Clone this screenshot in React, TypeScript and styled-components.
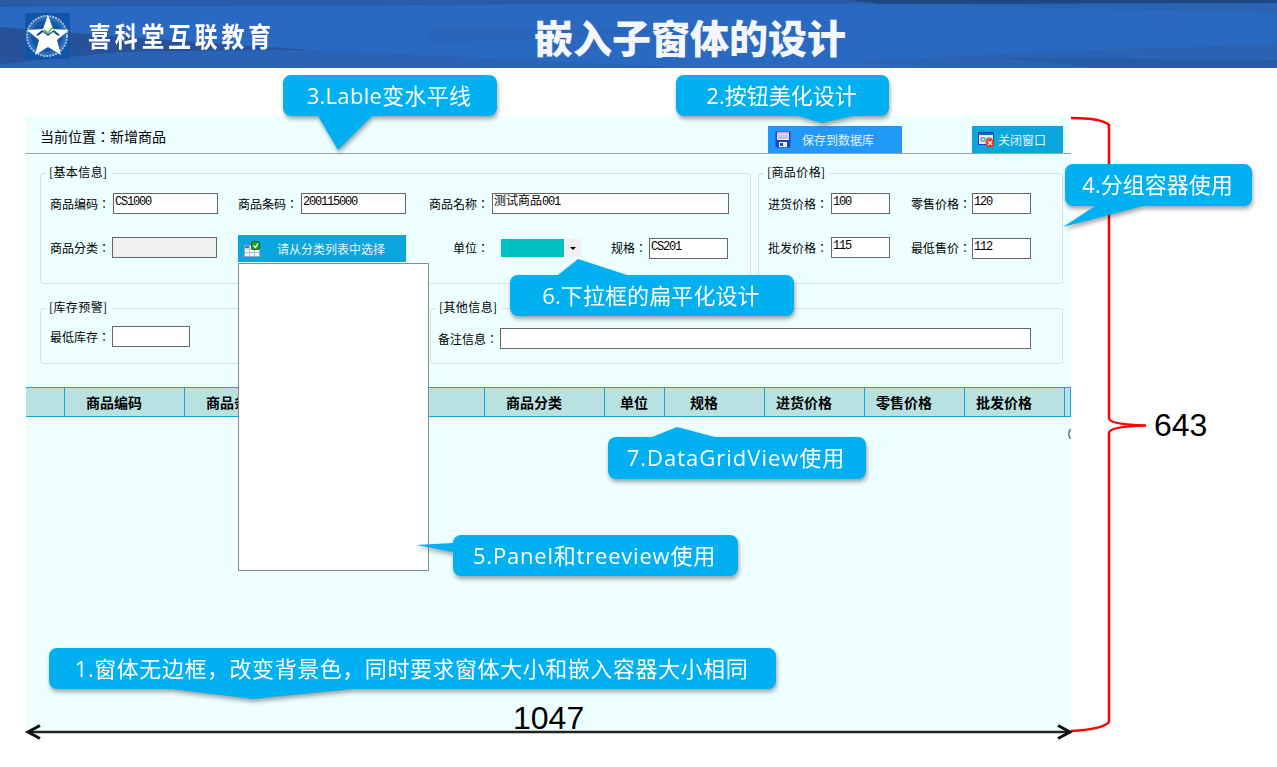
import React from 'react'
import { styled, createGlobalStyle } from 'styled-components'

const GlobalStyle = createGlobalStyle`
    html, body {
        margin: 0;
        padding: 0;
        background: #ffffff;
        overflow: hidden;
    }
    * {
        box-sizing: border-box;
    }
`

const UI_FONT = `"Noto Sans CJK SC", "Liberation Sans", sans-serif`
// the TC cut centres the full width colon, as the form labels in the picture do
const LABEL_FONT = `"Noto Sans CJK TC", "Noto Sans CJK SC", sans-serif`
const CALLOUT_FONT = `"Open Sans", "Noto Sans CJK SC", sans-serif`

const Slide = styled.div`
    position: relative;
    width: 1277px;
    height: 767px;
    overflow: hidden;
    background: #ffffff;
    font-family: ${UI_FONT};
`

const Header = styled.header`
    position: relative;
    display: flex;
    align-items: center;
    height: 68px;
    padding-left: 25px;
    background: #2a69c2;
    overflow: hidden;
`

const HeaderArt = styled.svg`
    position: absolute;
    left: 0;
    top: 0;
`

const LogoBox = styled.svg`
    position: relative;
    flex: none;
    margin-top: 4px;
`

const Brand = styled.div`
    position: relative;
    width: 186px;
    margin-left: 18px;
    margin-top: 3px;
    color: #ffffff;
    font-size: 27px;
    font-weight: 700;
    letter-spacing: 4.4px;
    white-space: nowrap;
    transform: scaleX(0.85);
    transform-origin: left center;
`

const Title = styled.h1`
    position: relative;
    margin: 4px 0 0 260px;
    color: #f4f6fa;
    font-size: 39px;
    line-height: 48px;
    font-weight: 900;
    white-space: nowrap;
`

const FormWindow = styled.main`
    position: relative;
    margin: 48px 0 0 26px;
    width: 1045px;
    height: 616px;
    background: #eeffff;
    color: #000000;
    font-size: 12px;
`

const Toolbar = styled.div`
    display: flex;
    align-items: flex-end;
    height: 38px;
    padding: 0 8px 0 14px;
    border-bottom: 1px solid #9a9fa0;
`

const Breadcrumb = styled.div`
    margin-right: auto;
    margin-bottom: 7px;
    font-family: ${LABEL_FONT};
    font-size: 14px;
    line-height: 20px;
`

const ToolButton = styled.div<{ $w: number; $bg: string; $gap: number; $iconLeft: number; $left?: number }>`
    display: flex;
    align-items: center;
    width: ${props => props.$w}px;
    height: 27px;
    margin-left: ${props => props.$left ?? 0}px;
    padding-left: ${props => props.$iconLeft}px;
    gap: ${props => props.$gap}px;
    background: ${props => props.$bg};
    color: #e8f4ff;
    font-size: 12px;
`

const GroupRow = styled.div<{ $top: number }>`
    display: flex;
    gap: 7px;
    margin-top: ${props => props.$top}px;
    padding-left: 14px;
`

const Group = styled.section<{ $w: number; $h: number; $padTop: number; $padLeft: number }>`
    position: relative;
    width: ${props => props.$w}px;
    height: ${props => props.$h}px;
    padding: ${props => props.$padTop}px 0 0 ${props => props.$padLeft}px;
    border: 1px solid #d4e0e4;
    border-radius: 4px;
`

const Legend = styled.div`
    position: absolute;
    left: 5px;
    top: -10px;
    padding: 0 3px;
    background: #eeffff;
    font-size: 12px;
    line-height: 16px;
    letter-spacing: 0.4px;
    white-space: nowrap;
`

const FieldRow = styled.div<{ $top?: number }>`
    display: flex;
    align-items: center;
    height: 21px;
    margin-top: ${props => props.$top ?? 0}px;
`

const Field = styled.div<{ $w: number }>`
    position: relative;
    display: flex;
    align-items: center;
    flex: none;
    width: ${props => props.$w}px;
    height: 21px;
`

const Label = styled.span<{ $w: number }>`
    flex: none;
    width: ${props => props.$w}px;
    font-family: ${LABEL_FONT};
    font-size: 12px;
    line-height: 21px;
    white-space: nowrap;
`

const TextBox = styled.div<{ $w: number; $disabled?: boolean; $shift?: number }>`
    flex: none;
    width: ${props => props.$w}px;
    height: 21px;
    margin-top: ${props => props.$shift ?? 0}px;
    padding: 1px 0 0 1px;
    border: 1px solid #666666;
    background: ${props => (props.$disabled ? '#efefef' : '#ffffff')};
    font-family: "Liberation Mono", ${UI_FONT};
    font-size: 12px;
    line-height: 14px;
    letter-spacing: -1.2px;
    white-space: nowrap;
    overflow: hidden;
`

const Han = styled.span`
    letter-spacing: 0;
`

const CategoryButton = styled.div`
    position: relative;
    flex: none;
    display: flex;
    align-items: center;
    width: 168px;
    height: 27px;
    margin-top: 2px;
    padding-left: 6px;
    background: #0aa6dc;
    color: #e8f6ff;
    font-size: 12px;
`

const CategoryText = styled.span`
    margin-left: 17px;
`

const TreePanel = styled.div`
    position: absolute;
    left: 0;
    top: 28px;
    z-index: 2;
    width: 191px;
    height: 308px;
    background: #ffffff;
    border: 1px solid #868b93;
`

const Combo = styled.div`
    flex: none;
    display: flex;
    width: 80px;
    height: 18px;
    margin-top: 1px;
`

const ComboValue = styled.div`
    width: 63px;
    background: #00c2c0;
`

const ComboArrow = styled.div`
    display: flex;
    align-items: center;
    justify-content: center;
    width: 17px;
    background: #f0f0f0;
    &::after {
        content: '';
        border-top: 3px solid #000000;
        border-left: 3px solid transparent;
        border-right: 3px solid transparent;
    }
`

const Grid = styled.div`
    display: flex;
    height: 30px;
    margin-top: 23px;
    background: #b8e2e2;
    border-top: 1px solid #0ea5dc;
    border-bottom: 1px solid #0ea5dc;
`

const GridCell = styled.div<{ $w: number; $pad?: number }>`
    flex: none;
    width: ${props => props.$w}px;
    padding-left: ${props => props.$pad ?? 0}px;
    border-right: 1px solid #0ea5dc;
    font-size: 14px;
    font-weight: 700;
    line-height: 29px;
    white-space: nowrap;
`

const StrayMark = styled.div`
    position: absolute;
    right: 0;
    top: 311px;
    font-family: "Liberation Sans", sans-serif;
    font-size: 10px;
    line-height: 14px;
`

const Callout = styled.div<{ $x: number; $y: number; $w: number; $h: number; $spacing?: number }>`
    position: absolute;
    z-index: 3;
    left: ${props => props.$x}px;
    top: ${props => props.$y}px;
    display: flex;
    align-items: center;
    justify-content: center;
    width: ${props => props.$w}px;
    height: ${props => props.$h}px;
    padding: 0 2px 4px 0;
    border-radius: 8px;
    background: #00b0f0;
    color: #ffffff;
    font-family: ${CALLOUT_FONT};
    font-size: 22px;
    letter-spacing: ${props => props.$spacing ?? 0}px;
    white-space: nowrap;
    filter: drop-shadow(1px 3px 2px rgba(0, 0, 0, 0.35));
`

const CalloutTail = styled.svg`
    position: absolute;
    left: 0;
    top: 0;
    overflow: visible;
`

const Dimension = styled.svg`
    position: absolute;
    z-index: 2;
    left: 0;
    top: 0;
    pointer-events: none;
`

const Measure = styled.div<{ $x: number; $y: number }>`
    position: absolute;
    z-index: 3;
    left: ${props => props.$x}px;
    top: ${props => props.$y}px;
    color: #000000;
    font-family: "Liberation Sans", sans-serif;
    font-size: 32px;
    line-height: 36px;
`

const callouts = [
    { text: '3.Lable变水平线', x: 283, y: 75, w: 214, h: 41, tail: '318,116 338,150 372,116', spacing: 0.3 },
    { text: '2.按钮美化设计', x: 676, y: 75, w: 213, h: 41, tail: '798,116 822,123 853,116' },
    { text: '4.分组容器使用', x: 1065, y: 164, w: 187, h: 42, tail: '1095,206 1063,227 1143,206' },
    { text: '6.下拉框的扁平化设计', x: 510, y: 275, w: 284, h: 41, tail: '558,275 578,259 627,275', spacing: 0.1 },
    { text: '7.DataGridView使用', x: 608, y: 437, w: 258, h: 42, tail: '652,437 677,427 715,437', spacing: 1 },
    { text: '5.Panel和treeview使用', x: 453, y: 535, w: 285, h: 41, tail: '453,543 416,545 453,552', spacing: 0.8 },
    {
        text: '1.窗体无边框，改变背景色，同时要求窗体大小和嵌入容器大小相同',
        x: 49,
        y: 648,
        w: 727,
        h: 41,
        tail: '171,689 253,699 352,689',
        spacing: 0.55,
    },
]

const gridColumns = [
    { w: 39 },
    { w: 120, text: '商品编码', pad: 21 },
    { w: 120, text: '商品条码', pad: 21 },
    { w: 180 },
    { w: 120, text: '商品分类', pad: 21 },
    { w: 60, text: '单位', pad: 15 },
    { w: 100, text: '规格', pad: 25 },
    { w: 100, text: '进货价格', pad: 11 },
    { w: 100, text: '零售价格', pad: 11 },
    { w: 100, text: '批发价格', pad: 11 },
    { w: 6 },
]

const Logo = () => (
    <LogoBox width="45" height="46" viewBox="0 0 45 46">
        <rect width="45" height="46" rx="2" fill="#0e56aa" />
        <circle cx="22" cy="23" r="20" fill="#2a6cb8" stroke="#a9bfd8" strokeWidth="2" strokeDasharray="2 1" />
        <circle cx="22" cy="23" r="16" fill="#1556a6" />
        <polygon
            points="23,2 28,16 44,17 32,27 36,42 23,34 10,42 14,27 2,17 18,16"
            fill="#ffffff"
        />
        <path d="M11 22 L17 17 L23 21 L29 17 L35 22 L30 24 L23 27 L16 24 Z" fill="#1c4f96" />
        <path d="M13 23 L18 19 L23 23 L28 19 L33 23 L23 31 Z" fill="#ffffff" />
        <path d="M19 17 L23 20 L28 14" fill="none" stroke="#62b848" strokeWidth="1.6" />
    </LogoBox>
)

const FloppyIcon = () => (
    <svg width="16" height="17" viewBox="0 0 16 17">
        <rect x="0.5" y="0.5" width="15" height="16" fill="#1546c0" />
        <rect x="2" y="1" width="12" height="2" fill="#f0a0e8" />
        <rect x="2" y="3" width="12" height="6" fill="#e8e8f8" />
        <path d="M3 5h10M3 7h10" stroke="#9aa0d0" />
        <rect x="4" y="11" width="8" height="5" fill="#f4f4ff" />
        <rect x="5" y="12" width="3" height="3" fill="#1546c0" />
    </svg>
)

const CloseWindowIcon = () => (
    <svg width="17" height="16" viewBox="0 0 17 16">
        <rect x="0.5" y="0.5" width="15" height="12" fill="#e8eef8" stroke="#1546c0" />
        <rect x="1" y="1" width="14" height="2" fill="#1f5fd0" />
        <path d="M3 6h4v3H3zM9 6h4v3H9z" fill="none" stroke="#5a6a8a" />
        <circle cx="12" cy="11" r="4.5" fill="#e03a20" />
        <path d="M10 9l4 4M14 9l-4 4" stroke="#ffe8d8" strokeWidth="1.4" />
    </svg>
)

const CategoryIcon = () => (
    <svg width="16" height="16" viewBox="0 0 16 16">
        <rect x="0.5" y="4.5" width="15" height="11" fill="#f8fbfd" stroke="#9aa8b8" />
        <path d="M1 8h14M1 11.500h14M5.500 5v10M10.500 5v10" stroke="#b4bec8" />
        <rect x="1" y="5" width="4" height="2" fill="#3a7ad0" />
        <rect x="7.500" y="0.500" width="8" height="8" rx="1.500" fill="#20a020" stroke="#106810" />
        <path d="M9.500 4.500l2 2 2.500-4" fill="none" stroke="#ffffff" strokeWidth="1.300" />
    </svg>
)

export default function App() {
    return (
        <Slide>
            <GlobalStyle />
            <Header>
                <HeaderArt width="1277" height="68" viewBox="0 0 1277 68">
                    <polygon points="0,0 1277,0 1277,3 600,4 0,7" fill="#2a5ba8" />
                    <polygon points="850,0 1277,0 1277,3 880,4" fill="#1f4684" />
                    <polygon points="0,27 140,38 310,50 120,52 0,66" fill="#27529a" />
                    <polygon points="0,64 120,52 310,50 700,68 0,68" fill="#2a62b5" />
                    <polygon points="430,28 620,30 900,18 430,44" fill="#2a65ba" />
                    <polygon points="850,4 1277,12 1277,4" fill="#2a62b4" />
                    <polygon points="850,62 1040,52 1277,44 1277,68 950,68" fill="#2a63b4" />
                    <polygon points="1000,58 1277,60 1277,68 1100,68" fill="#265ba6" />
                </HeaderArt>
                <Logo />
                <Brand>喜科堂互联教育</Brand>
                <Title>嵌入子窗体的设计</Title>
            </Header>

            <FormWindow>
                <Toolbar>
                    <Breadcrumb>当前位置：新增商品</Breadcrumb>
                    <ToolButton $w={134} $bg="#2299f8" $gap={11} $iconLeft={7}>
                        <FloppyIcon />
                        保存到数据库
                    </ToolButton>
                    <ToolButton $w={91} $bg="#0aa6dc" $gap={3} $iconLeft={6} $left={70}>
                        <CloseWindowIcon />
                        关闭窗口
                    </ToolButton>
                </Toolbar>

                <GroupRow $top={19}>
                    <Group $w={711} $h={111} $padTop={19} $padLeft={9}>
                        <Legend>[基本信息]</Legend>
                        <FieldRow>
                            <Field $w={188}>
                                <Label $w={63}>商品编码：</Label>
                                <TextBox $w={105}>CS1000</TextBox>
                            </Field>
                            <Field $w={191}>
                                <Label $w={63}>商品条码：</Label>
                                <TextBox $w={105}>200115000</TextBox>
                            </Field>
                            <Field $w={300}>
                                <Label $w={63}>商品名称：</Label>
                                <TextBox $w={237}>
                                    <Han>测试商品</Han>001
                                </TextBox>
                            </Field>
                        </FieldRow>
                        <FieldRow $top={23}>
                            <Field $w={188}>
                                <Label $w={62}>商品分类：</Label>
                                <TextBox $w={105} $disabled />
                            </Field>
                            <Field $w={215}>
                                <CategoryButton>
                                    <CategoryIcon />
                                    <CategoryText>请从分类列表中选择</CategoryText>
                                    <TreePanel />
                                </CategoryButton>
                            </Field>
                            <Field $w={158}>
                                <Label $w={48}>单位：</Label>
                                <Combo>
                                    <ComboValue />
                                    <ComboArrow />
                                </Combo>
                            </Field>
                            <Field $w={117}>
                                <Label $w={38}>规格：</Label>
                                <TextBox $w={79} $shift={1}>
                                    CS201
                                </TextBox>
                            </Field>
                        </FieldRow>
                    </Group>
                    <Group $w={305} $h={111} $padTop={19} $padLeft={9}>
                        <Legend>[商品价格]</Legend>
                        <FieldRow>
                            <Field $w={143}>
                                <Label $w={63}>进货价格：</Label>
                                <TextBox $w={59}>100</TextBox>
                            </Field>
                            <Field $w={120}>
                                <Label $w={61}>零售价格：</Label>
                                <TextBox $w={59}>120</TextBox>
                            </Field>
                        </FieldRow>
                        <FieldRow $top={23}>
                            <Field $w={143}>
                                <Label $w={63}>批发价格：</Label>
                                <TextBox $w={59}>115</TextBox>
                            </Field>
                            <Field $w={120}>
                                <Label $w={61}>最低售价：</Label>
                                <TextBox $w={59} $shift={2}>
                                    112
                                </TextBox>
                            </Field>
                        </FieldRow>
                    </Group>
                </GroupRow>

                <GroupRow $top={24}>
                    <Group $w={383} $h={56} $padTop={17} $padLeft={9}>
                        <Legend>[库存预警]</Legend>
                        <FieldRow>
                            <Field $w={200}>
                                <Label $w={62}>最低库存：</Label>
                                <TextBox $w={78} />
                            </Field>
                        </FieldRow>
                    </Group>
                    <Group $w={633} $h={56} $padTop={19} $padLeft={7}>
                        <Legend>[其他信息]</Legend>
                        <FieldRow>
                            <Field $w={600}>
                                <Label $w={62}>备注信息：</Label>
                                <TextBox $w={531} />
                            </Field>
                        </FieldRow>
                    </Group>
                </GroupRow>

                <Grid>
                    {gridColumns.map((column, index) => (
                        <GridCell key={index} $w={column.w} $pad={column.pad}>
                            {column.text}
                        </GridCell>
                    ))}
                </Grid>
                <StrayMark>(</StrayMark>
            </FormWindow>

            {callouts.map(callout => (
                <Callout
                    key={callout.text}
                    $x={callout.x}
                    $y={callout.y}
                    $w={callout.w}
                    $h={callout.h}
                    $spacing={callout.spacing}
                >
                    <CalloutTail
                        width={callout.w}
                        height={callout.h}
                        viewBox={`${callout.x} ${callout.y} ${callout.w} ${callout.h}`}
                    >
                        <polygon points={callout.tail} fill="#00b0f0" />
                    </CalloutTail>
                    {callout.text}
                </Callout>
            ))}

            <Dimension width="1277" height="767" viewBox="0 0 1277 767">
                <path
                    d="M1071 118 C1090 118 1104 120 1109 125 L1109 418 C1109 423 1125 425 1146 425.500 C1125 426 1109 428 1109 433 L1109 722 C1104 728 1090 730 1071 731"
                    fill="none"
                    stroke="#ff0000"
                    strokeWidth="2.500"
                />
                <path d="M28 732 L1070 732" stroke="#222222" strokeWidth="2.500" />
                <path d="M40 725.500 L28 732 L40 738.500" fill="none" stroke="#111111" strokeWidth="3" />
                <path d="M1058 725.500 L1070 732 L1058 738.500" fill="none" stroke="#111111" strokeWidth="3" />
            </Dimension>
            <Measure $x={1154} $y={407}>643</Measure>
            <Measure $x={513} $y={700}>1047</Measure>
        </Slide>
    )
}
